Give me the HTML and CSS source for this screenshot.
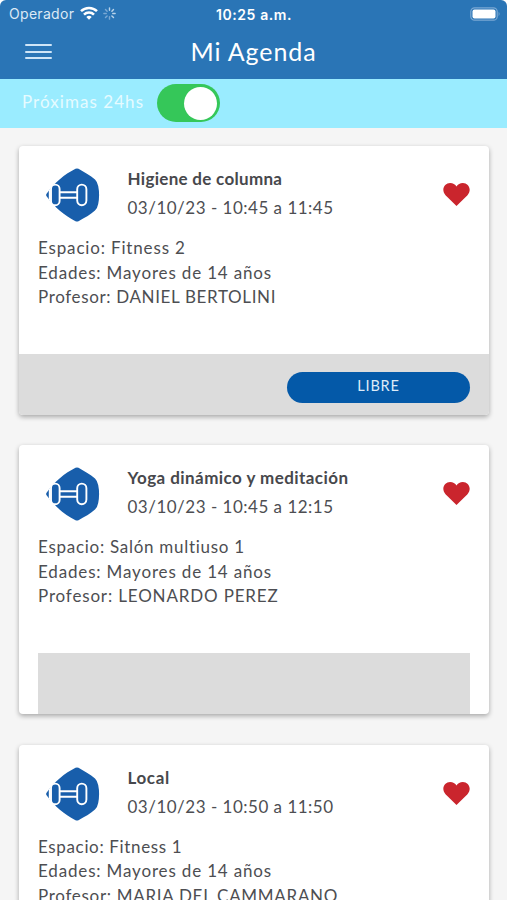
FILE: index.html
```html
<!DOCTYPE html>
<html lang="es">
<head>
<meta charset="utf-8">
<title>Mi Agenda</title>
<link rel="stylesheet" href="styles.css">
</head>
<body>
<svg width="0" height="0" class="defs" aria-hidden="true">
  <symbol id="dumbbell" viewBox="0 0 54 54">
    <path d="M29.500 .8Q31 0 32.500 .8C39 5 44 7 49 11.500Q51.500 14 52.200 18Q54 27 52.200 36Q51.500 40 49 42.500C44 47 39 49.500 32.500 53.200Q31 54 29.500 53.200C19 48 8 39 .4 28Q-.1 27 .4 26C8 15 19 6 29.500 .8Z" fill="#185eab"/>
    <g fill="#185eab" stroke="#fff" stroke-width="1.900">
      <path d="M3.600 21.500V32.500" stroke-width="1.600"/>
      <path d="M13 24.300H32M13 29.800H32" stroke-width="1.900"/>
      <rect x="5" y="16.600" width="8.600" height="20.600" rx="4.300"/>
      <rect x="31.200" y="16.600" width="9.200" height="20.600" rx="4.600"/>
    </g>
  </symbol>
  <symbol id="heart" viewBox="0 0 28 25">
    <path d="M14 24.500L2.600 13.200C-2.400 7.400 1.600.5 7.400.5C10.300.5 12.600 2 14 4.100C15.400 2 17.700.5 20.600.5C26.400.5 30.400 7.400 25.400 13.200Z" fill="#ca252d"/>
  </symbol>
</svg>
<header class="top">
  <div class="status">
    <div class="carrier">
      <span class="op">Operador</span>
      <svg class="wifi" viewBox="0 0 18 14"><g fill="none" stroke="#fff" stroke-width="2.500"><path d="M1 5.200A11.500 11.500 0 0 1 17 5.200"/><path d="M4 8.600A7 7 0 0 1 14 8.600"/></g><path d="M9 13.800L6.300 11A3.800 3.800 0 0 1 11.700 11Z" fill="#fff"/></svg>
      <svg class="spin" viewBox="0 0 12 12"><g stroke="#b9d3ea" stroke-width="1.300" stroke-linecap="round"><path d="M6 .8V3M9.700 2.300L8.200 3.900M11.200 6H9M9.700 9.700L8.200 8.200"/><path d="M6 11.200V9M2.300 9.700L3.800 8.200M.8 6H3M2.300 2.300L3.800 3.900" stroke="#7aa9d4"/></g></svg>
    </div>
    <span class="time">10:25 a.m.</span>
    <svg class="battery" viewBox="0 0 31 14"><rect x=".8" y=".8" width="26.400" height="12.400" rx="3.800" fill="none" stroke="#7aa8d3" stroke-width="1.200"/><rect x="2.500" y="2.500" width="23" height="9" rx="2" fill="#fff"/><path d="M28.600 4.800Q30.500 7 28.600 9.200Z" fill="#7aa8d3"/></svg>
  </div>
  <div class="bar">
    <div class="menu"><i></i><i></i><i></i></div>
    <h1>Mi Agenda</h1>
  </div>
</header>
<div class="filter">
  <span class="filter-label">Próximas 24hs</span>
  <div class="switch"><div class="knob"></div></div>
</div>
<main>
  <article class="card">
    <div class="head">
      <svg class="badge"><use href="#dumbbell"/></svg>
      <div class="titles"><h2 class="t1">Higiene de columna</h2><p>03/10/23 - 10:45 a 11:45</p></div>
      <svg class="heart"><use href="#heart"/></svg>
    </div>
    <div class="info"><p>Espacio: Fitness 2</p><p class="ages">Edades: Mayores de 14 años</p><p class="p1">Profesor: DANIEL BERTOLINI</p></div>
    <div class="foot"><button>LIBRE</button></div>
  </article>
  <article class="card">
    <div class="head">
      <svg class="badge"><use href="#dumbbell"/></svg>
      <div class="titles"><h2 class="t2">Yoga dinámico y meditación</h2><p>03/10/23 - 10:45 a 12:15</p></div>
      <svg class="heart"><use href="#heart"/></svg>
    </div>
    <div class="info"><p class="e2">Espacio: Salón multiuso 1</p><p class="ages">Edades: Mayores de 14 años</p><p class="p2">Profesor: LEONARDO PEREZ</p></div>
    <div class="foot inset"></div>
  </article>
  <article class="card">
    <div class="head">
      <svg class="badge"><use href="#dumbbell"/></svg>
      <div class="titles"><h2 class="t3">Local</h2><p>03/10/23 - 10:50 a 11:50</p></div>
      <svg class="heart"><use href="#heart"/></svg>
    </div>
    <div class="info"><p class="e3">Espacio: Fitness 1</p><p class="ages">Edades: Mayores de 14 años</p><p class="p3">Profesor: MARIA DEL CAMMARANO</p></div>
    <div class="foot"></div>
  </article>
</main>
</body>
</html>
```
FILE: styles.css
```css
* { box-sizing: border-box; }
html { background: #fff; }
body { margin: 0; height: 900px; overflow: hidden; background: #fff; color: #4d4e52; font-family: Lato, sans-serif; display: flex; flex-direction: column; }
h1, h2, p { margin: 0; white-space: nowrap; }
.defs { display: none; }
.top { flex: none; height: 79px; background: #2a75b6; color: #fff; border-radius: 6px 6px 0 0; }
.status { height: 28px; display: grid; grid-template-columns: 1fr auto 1fr; align-items: center; padding: 0 6px 0 9px; font-family: Inter, sans-serif; font-size: 14px; }
.carrier { display: flex; align-items: center; margin-top: -2px; }
.op { color: #dce9f5; letter-spacing: .3px; width: 66px; margin-right: 5px; }
.wifi { width: 18px; height: 14px; margin-right: 5px; }
.spin { width: 13px; height: 13px; }
.time { font-weight: 600; letter-spacing: .6px; margin-left: -2px; }
.battery { width: 31px; height: 14px; justify-self: end; margin-top: -1px; }
.bar { height: 51px; display: grid; grid-template-columns: 1fr auto 1fr; padding: 0 25px; }
.menu { width: 27px; display: flex; flex-direction: column; gap: 4.500px; padding-top: 16px; }
.menu i { height: 2px; border-radius: 1px; background: #cfe5f7; }
h1 { font-weight: 400; font-size: 25px; line-height: 46px; letter-spacing: .9px; }
.filter { flex: none; height: 49px; background: #9aecff; display: flex; padding-left: 22px; }
.filter-label { width: 135px; color: #e6fbff; font-size: 17px; line-height: 46px; letter-spacing: 1.050px; }
.switch { width: 63px; height: 38px; margin-top: 5px; padding: 2.500px 3px; border-radius: 19px; background: #35c759; display: flex; justify-content: flex-end; }
.knob { width: 33px; height: 33px; border-radius: 50%; background: #fff; }
main { flex: 1; min-height: 0; background: #f5f5f5; padding: 18px 18px 0 19px; display: flex; flex-direction: column; gap: 30.300px; }
.card { flex: none; height: 269px; background: #fff; border-radius: 4px; box-shadow: 0 2px 5px rgba(0,0,0,.32); overflow: hidden; display: flex; flex-direction: column; }
.head { height: 90px; display: flex; padding: 0 19px 0 27px; }
.badge { width: 54px; height: 54px; margin-top: 22px; }
.titles { flex: 1; padding: 18px 0 0 27.500px; }
h2 { font-size: 17px; line-height: 29px; font-weight: 700; color: #47484c; }
.t1 { letter-spacing: .3px; }
.t2 { letter-spacing: .44px; }
.t3 { letter-spacing: .6px; }
.titles p { font-size: 17px; line-height: 29px; letter-spacing: .5px; }
.heart { width: 27px; height: 25px; margin-top: 36px; }
.info { flex: 1; padding-left: 19px; font-size: 17px; line-height: 24.500px; letter-spacing: .84px; }
.e2 { letter-spacing: .72px; }
.e3 { letter-spacing: .65px; }
.p1 { letter-spacing: .64px; }
.p3 { letter-spacing: .7px; }
.foot { height: 61px; background: #dcdcdc; display: flex; justify-content: flex-end; padding: 18px 19px 0 0; }
.inset { margin: 0 19px; }
button { width: 183px; height: 31px; border: 0; border-radius: 16px; background: #0459a8; color: #dcebf8; font: 14.500px Lato, sans-serif; letter-spacing: .8px; padding: 0 0 4px; }
```
